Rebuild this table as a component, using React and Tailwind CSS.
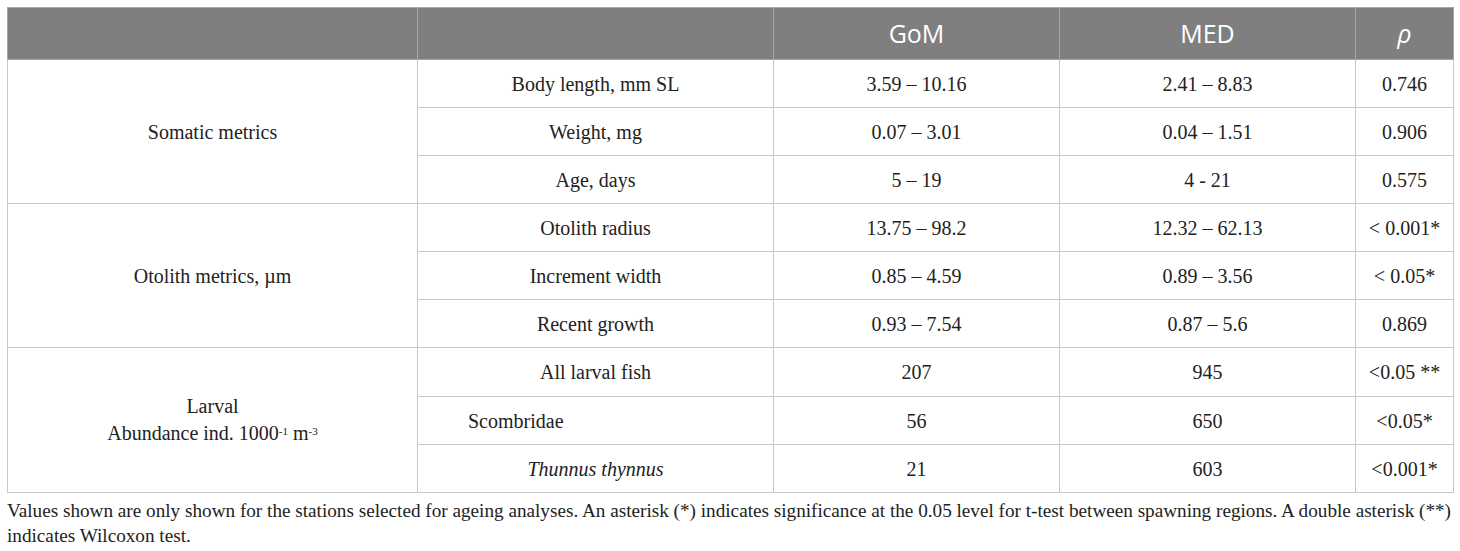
import React from 'react';

const rows = [
  { group: 'Somatic metrics', span: 3, label: 'Body length, mm SL', gom: '3.59 – 10.16', med: '2.41 – 8.83', p: '0.746' },
  { label: 'Weight, mg', gom: '0.07 – 3.01', med: '0.04 – 1.51', p: '0.906' },
  { label: 'Age, days', gom: '5 – 19', med: '4 - 21', p: '0.575' },
  { group: 'Otolith metrics, µm', span: 3, label: 'Otolith radius', gom: '13.75 – 98.2', med: '12.32 – 62.13', p: '< 0.001*' },
  { label: 'Increment width', gom: '0.85 – 4.59', med: '0.89 – 3.56', p: '< 0.05*' },
  { label: 'Recent growth', gom: '0.93 – 7.54', med: '0.87 – 5.6', p: '0.869' },
  { group: 'larval', span: 3, label: 'All larval fish', gom: '207', med: '945', p: '<0.05 **', tall: true },
  { label: 'Scombridae', left: true, gom: '56', med: '650', p: '<0.05*' },
  { label: 'Thunnus thynnus', italic: true, gom: '21', med: '603', p: '<0.001*' },
];

const cell = 'border border-[#c8c8c8] text-center align-middle';

const GroupLabel = ({ group }) => {
  if (group === 'larval') {
    return (
      <div className="leading-[27px]">
        Larval
        <br />
        Abundance ind. 1000<sup className="text-[11px]">-1</sup> m<sup className="text-[11px]">-3</sup>
      </div>
    );
  }
  return group;
};

const App = () => {
  return (
    <div className="bg-white w-[1460px] h-[551px] pt-[7px] pl-[7px] font-['Liberation_Serif',serif] text-[20px] text-[#222]">
      <table className="w-[1446px] border-collapse table-fixed">
        <colgroup>
          <col className="w-[410px]" />
          <col className="w-[356px]" />
          <col className="w-[286px]" />
          <col className="w-[296px]" />
          <col className="w-[98px]" />
        </colgroup>
        <thead>
          <tr className="bg-[#7f7f7f] text-white font-['Open_Sans',sans-serif] text-[25px]">
            <th className="h-[52px] border border-[#a6a6a6] font-normal"></th>
            <th className="h-[52px] border border-[#a6a6a6] font-normal"></th>
            <th className="h-[52px] border border-[#a6a6a6] font-normal">GoM</th>
            <th className="h-[52px] border border-[#a6a6a6] font-normal">MED</th>
            <th className="h-[52px] border border-[#a6a6a6] font-normal italic">ρ</th>
          </tr>
        </thead>
        <tbody>
          {rows.map((r) => (
            <tr key={r.label} className={r.tall ? 'h-[49px]' : 'h-[48px]'}>
              {r.group && (
                <td rowSpan={r.span} className={cell}>
                  <GroupLabel group={r.group} />
                </td>
              )}
              <td className={`${cell} ${r.left ? 'text-left pl-[50px]' : ''} ${r.italic ? 'italic' : ''}`}>{r.label}</td>
              <td className={cell}>{r.gom}</td>
              <td className={cell}>{r.med}</td>
              <td className={cell}>{r.p}</td>
            </tr>
          ))}
        </tbody>
      </table>
      <p className="mt-[5px] text-[19.2px] leading-[25px] whitespace-nowrap">
        Values shown are only shown for the stations selected for ageing analyses. An asterisk (*) indicates significance at the 0.05 level for t-test between spawning regions. A double asterisk (**)
        <br />
        indicates Wilcoxon test.
      </p>
    </div>
  );
};

export default App;
